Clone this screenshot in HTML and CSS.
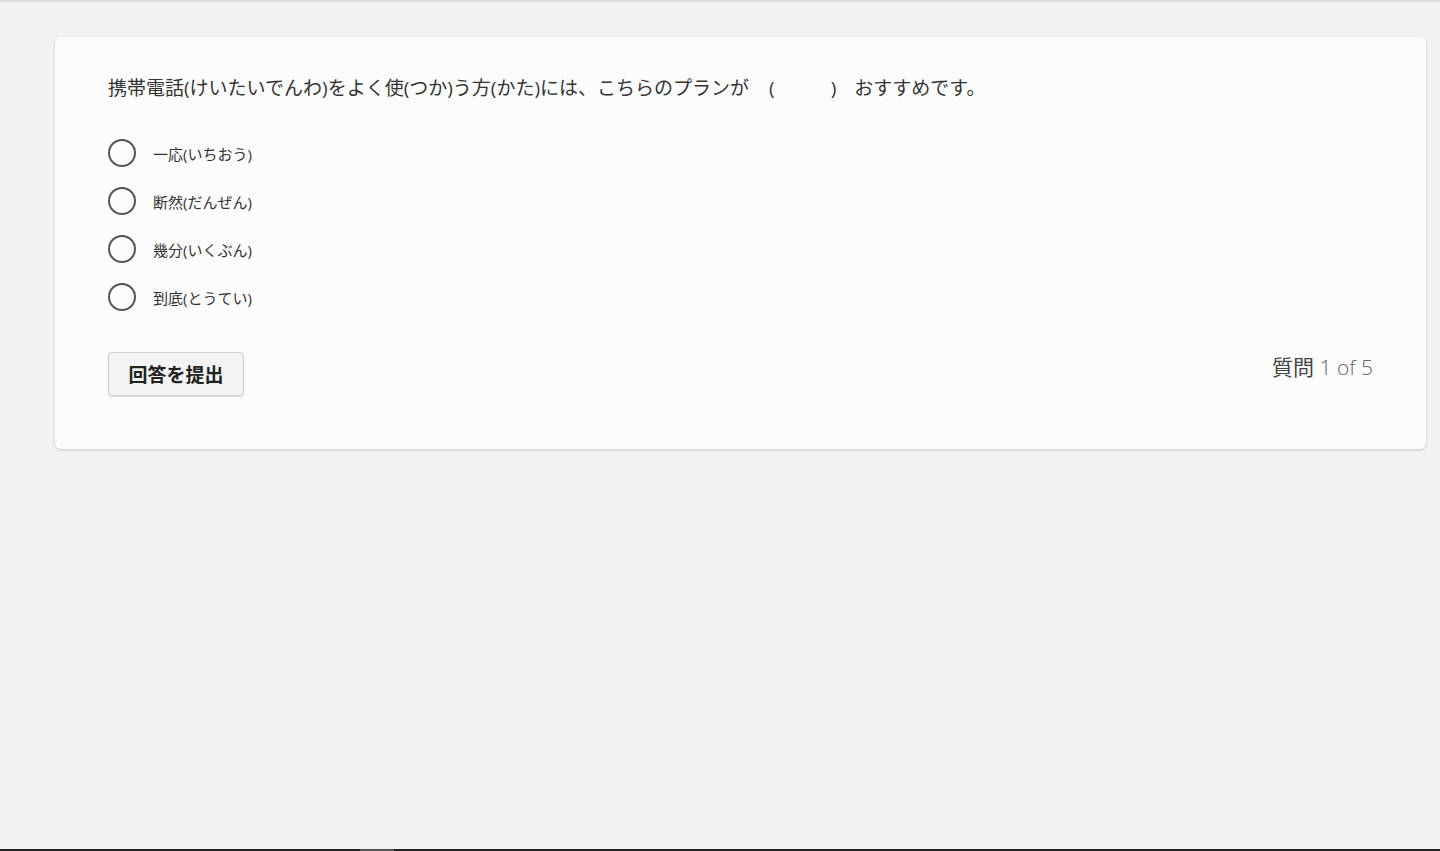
FILE: index.html
```html
<!DOCTYPE html>
<html lang="ja">
<head>
  <meta charset="UTF-8" />
  <meta name="viewport" content="width=device-width, initial-scale=1.0" />
  <title>クイズ</title>
  <link rel="stylesheet" href="styles.css">
</head>
<body>
  <div class="top-line"></div>

  <main class="quiz-card">
    <p class="question">携帯電話(けいたいでんわ)をよく使(つか)う方(かた)には、こちらのプランが<span class="blank">(<span class="gap"></span>)</span>おすすめです。</p>

    <form class="options">
      <label class="option"><input type="radio" name="answer" value="1" /><span class="circle"></span>一応(いちおう)</label>
      <label class="option"><input type="radio" name="answer" value="2" /><span class="circle"></span>断然(だんぜん)</label>
      <label class="option"><input type="radio" name="answer" value="3" /><span class="circle"></span>幾分(いくぶん)</label>
      <label class="option"><input type="radio" name="answer" value="4" /><span class="circle"></span>到底(とうてい)</label>
    </form>

    <div class="quiz-footer">
      <button type="button" class="submit-btn">回答を提出</button>
      <div class="counter">質問 <span class="count">1 of 5</span></div>
    </div>
  </main>

  <div class="bottom-bar"><span class="thumb"></span></div>
</body>
</html>
```

FILE: styles.css
```css
html, body {
  height: 100%;
}

body {
  font-family: "Open Sans", "Noto Sans CJK JP", sans-serif;
  margin: 0;
  padding: 0;
  background-color: #f2f2f2;
  color: #333;
  position: relative;
  overflow: hidden;
}

.top-line {
  height: 2px;
  background-color: #dcdcdc;
}

.quiz-card {
  margin: 35px 14px 0 55px;
  background-color: #fcfcfc;
  border-radius: 6px;
  box-shadow: 0 1px 3px rgba(0, 0, 0, 0.18);
  padding: 38px 53px 53px 53px;
}

.question {
  margin: 0 0 38px;
  font-size: 19px;
  line-height: 26px;
  color: #333;
}

.blank {
  margin: 0 18px 0 20px;
}

.gap {
  display: inline-block;
  width: 56px;
}

.options {
  display: flex;
  flex-direction: column;
  gap: 20px;
  margin-bottom: 41px;
}

.option {
  display: flex;
  align-items: center;
  height: 28px;
  font-size: 15px;
  color: #333;
  cursor: pointer;
}

.option input {
  display: none;
}

.circle {
  width: 24px;
  height: 24px;
  border: 2px solid #555;
  border-radius: 50%;
  margin-right: 17px;
  flex-shrink: 0;
}

.option input:checked + .circle {
  background: radial-gradient(circle, #555 40%, transparent 45%);
}

.quiz-footer {
  display: flex;
  justify-content: space-between;
  align-items: center;
}

.submit-btn {
  font-family: "Open Sans", "Noto Sans CJK JP", sans-serif;
  font-size: 19px;
  font-weight: bold;
  color: #222;
  background-color: #f4f4f4;
  border: 1px solid #d0d0d0;
  border-radius: 4px;
  box-shadow: 0 1px 1px rgba(0, 0, 0, 0.12);
  width: 136px;
  height: 44px;
  padding: 0;
  cursor: pointer;
}

.counter {
  font-size: 21px;
  color: #444;
  margin-top: -17px;
}

.count {
  color: #666;
  font-weight: 300;
}

.bottom-bar {
  position: absolute;
  left: 0;
  right: 0;
  bottom: 0;
  height: 2px;
  background-color: #222;
}

.thumb {
  position: absolute;
  left: 360px;
  width: 34px;
  height: 2px;
  background-color: #555;
}
```
